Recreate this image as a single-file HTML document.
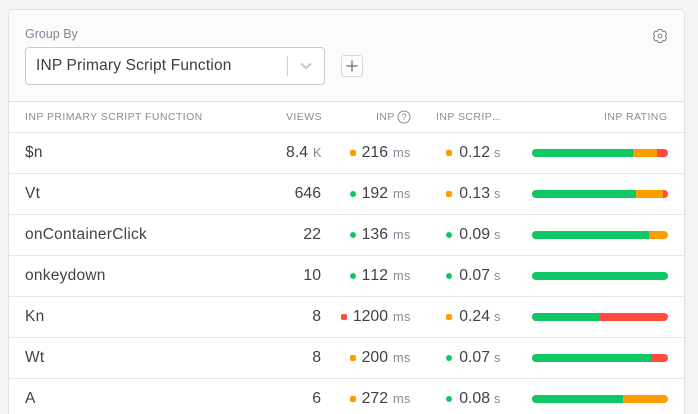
<!DOCTYPE html>
<html><head><meta charset="utf-8"><style>
*{box-sizing:border-box;margin:0;padding:0}
html,body{width:698px;height:414px;overflow:hidden;background:#f4f4f4;font-family:"Liberation Sans",sans-serif}
.abs,.t{position:absolute;white-space:nowrap}
#card{position:absolute;left:8px;top:9px;width:677px;height:405px;background:#fff;border:1px solid #e2e2e2;border-bottom:0;border-radius:5px 5px 0 0;box-shadow:0 0 2px rgba(0,0,0,.03)}
#head{position:absolute;left:9px;top:10px;width:675px;height:91px;background:#fbfbfb;border-radius:4px 4px 0 0}
.hl{position:absolute;left:9px;width:675px;height:1px;background:#e8e8e8}
.th{position:absolute;top:111px;line-height:13px;font-size:10.5px;letter-spacing:.43px;color:#828f9c;white-space:nowrap}
.n{position:absolute;left:25px;font-size:15.5px;letter-spacing:.25px;line-height:18px;color:#3f4247;white-space:nowrap}
.v{position:absolute;font-size:15.8px;font-kerning:none;line-height:18px;color:#3f4247;text-align:right;white-space:nowrap}
.u{position:absolute;font-size:12.8px;line-height:18px;color:#7f8d9b;white-space:nowrap;letter-spacing:.3px}
.d{position:absolute;width:6px;height:6px;border-radius:2px}
.g{background:#0fc864}.o{background:#ff9d00}.r{background:#ff4a3d}
.d.g{border-radius:50%}
.bar{position:absolute;left:532px;width:136px;height:8px;border-radius:4px;overflow:hidden;background:#ff4a3d}
.bar i{position:absolute;top:0;height:8px;left:0}
</style></head><body>
<div id="card"></div><div id="head"></div>
<div class="hl" style="top:101px;background:#dfdfdf"></div>
<div class="t" style="left:25px;top:27px;font-size:12.5px;line-height:15px;color:#7d8995">Group By</div>
<div class="abs" style="left:25px;top:47px;width:300px;height:38px;background:#fff;border:1px solid #c9c9c9;border-radius:4px"></div>
<div class="t" style="left:36px;top:57px;font-size:15.5px;line-height:18px;letter-spacing:.17px;color:#3a3d42">INP Primary Script Function</div>
<div class="abs" style="left:287px;top:56px;width:1px;height:20px;background:#cfcfcf"></div>
<svg class="abs" style="left:299px;top:61px" width="14" height="10" viewBox="0 0 14 10"><path d="M2 2.5 7 7l5-4.5" fill="none" stroke="#c8c8c8" stroke-width="2"/></svg>
<div class="abs" style="left:341px;top:55px;width:22px;height:22px;border:1px solid #dadada;border-radius:3px;background:#fbfbfb"></div>
<svg class="abs" style="left:341px;top:55px" width="22" height="22" viewBox="0 0 22 22"><path d="M11 5.5v11M5.5 11h11" stroke="#6a7076" stroke-width="1.3" fill="none"/></svg>
<svg class="abs" style="left:652px;top:28px" width="16" height="16" viewBox="0 0 16 16"><path d="M6.35 1.4H9.65L10.65 3.41 12.89 3.27 14.54 6.12 13.3 8 14.54 9.88 12.89 12.73 10.65 12.59 9.65 14.6H6.35L5.35 12.59 3.11 12.73 1.46 9.88 2.7 8 1.46 6.12 3.11 3.27 5.35 3.41Z" fill="none" stroke="#7a8590" stroke-width="1" stroke-linejoin="round"/><circle cx="8" cy="8" r="2" fill="none" stroke="#7a8590" stroke-width="1"/></svg>
<div class="th" style="left:25px">INP PRIMARY SCRIPT FUNCTION</div>
<div class="th" style="left:286px">VIEWS</div>
<div class="th" style="left:376px">INP</div>
<svg class="abs" style="left:397px;top:110px" width="14" height="14" viewBox="0 0 14 14"><circle cx="7" cy="7" r="6" fill="none" stroke="#828f9c" stroke-width="1"/><text x="7" y="10.2" font-size="9" text-anchor="middle" fill="#828f9c" font-family="Liberation Sans">?</text></svg>
<div class="th" style="left:436px">INP SCRIP<span style="letter-spacing:-.4px">...</span></div>
<div class="th" style="left:604px">INP RATING</div>

<div class="hl" style="top:132px"></div><div class="hl" style="top:173px"></div><div class="hl" style="top:214px"></div><div class="hl" style="top:255px"></div><div class="hl" style="top:296px"></div><div class="hl" style="top:337px"></div><div class="hl" style="top:378px"></div>

<div class="n" style="top:144px">$n</div>
<div class="v" style="right:390px;top:144px">8.4</div><div class="u" style="left:313px;top:144px">K</div>
<div class="d o" style="left:350px;top:150px"></div><div class="v" style="right:310px;top:144px">216</div><div class="u" style="left:393px;top:144px">ms</div>
<div class="d o" style="left:446px;top:150px"></div><div class="v" style="right:208px;top:144px">0.12</div><div class="u" style="left:494px;top:144px">s</div>
<div class="bar" style="top:149px"><i class="o" style="width:125px"></i><i class="g" style="width:101px"></i></div>

<div class="n" style="top:185px">Vt</div>
<div class="v" style="right:377px;top:185px">646</div>
<div class="d g" style="left:350px;top:191px"></div><div class="v" style="right:310px;top:185px">192</div><div class="u" style="left:393px;top:185px">ms</div>
<div class="d o" style="left:446px;top:191px"></div><div class="v" style="right:208px;top:185px">0.13</div><div class="u" style="left:494px;top:185px">s</div>
<div class="bar" style="top:190px"><i class="o" style="width:131px"></i><i class="g" style="width:104px"></i></div>

<div class="n" style="top:226px">onContainerClick</div>
<div class="v" style="right:377px;top:226px">22</div>
<div class="d g" style="left:350px;top:232px"></div><div class="v" style="right:310px;top:226px">136</div><div class="u" style="left:393px;top:226px">ms</div>
<div class="d g" style="left:446px;top:232px"></div><div class="v" style="right:208px;top:226px">0.09</div><div class="u" style="left:494px;top:226px">s</div>
<div class="bar" style="top:231px;background:#ff9d00"><i class="g" style="width:117px"></i></div>

<div class="n" style="top:267px">onkeydown</div>
<div class="v" style="right:377px;top:267px">10</div>
<div class="d g" style="left:350px;top:273px"></div><div class="v" style="right:310px;top:267px">112</div><div class="u" style="left:393px;top:267px">ms</div>
<div class="d g" style="left:446px;top:273px"></div><div class="v" style="right:208px;top:267px">0.07</div><div class="u" style="left:494px;top:267px">s</div>
<div class="bar" style="top:272px;background:#0fc864"></div>

<div class="n" style="top:308px">Kn</div>
<div class="v" style="right:377px;top:308px">8</div>
<div class="d r" style="left:341px;top:314px"></div><div class="v" style="right:310px;top:308px">1200</div><div class="u" style="left:393px;top:308px">ms</div>
<div class="d o" style="left:446px;top:314px"></div><div class="v" style="right:208px;top:308px">0.24</div><div class="u" style="left:494px;top:308px">s</div>
<div class="bar" style="top:313px"><i class="g" style="width:68px"></i></div>

<div class="n" style="top:349px">Wt</div>
<div class="v" style="right:377px;top:349px">8</div>
<div class="d o" style="left:350px;top:355px"></div><div class="v" style="right:310px;top:349px">200</div><div class="u" style="left:393px;top:349px">ms</div>
<div class="d g" style="left:446px;top:355px"></div><div class="v" style="right:208px;top:349px">0.07</div><div class="u" style="left:494px;top:349px">s</div>
<div class="bar" style="top:354px"><i class="g" style="width:119px"></i></div>

<div class="n" style="top:390px">A</div>
<div class="v" style="right:377px;top:390px">6</div>
<div class="d o" style="left:350px;top:396px"></div><div class="v" style="right:310px;top:390px">272</div><div class="u" style="left:393px;top:390px">ms</div>
<div class="d g" style="left:446px;top:396px"></div><div class="v" style="right:208px;top:390px">0.08</div><div class="u" style="left:494px;top:390px">s</div>
<div class="bar" style="top:395px;background:#ff9d00"><i class="g" style="width:91px"></i></div>
</body></html>
